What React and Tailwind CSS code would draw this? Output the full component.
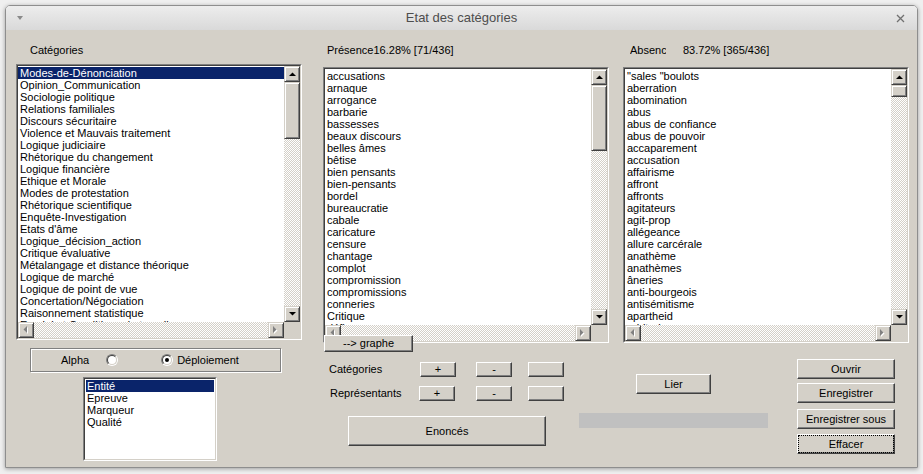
import React from 'react';

const categories = [
  'Modes-de-Dénonciation',
  'Opinion_Communication',
  'Sociologie politique',
  'Relations familiales',
  'Discours sécuritaire',
  'Violence et Mauvais traitement',
  'Logique judiciaire',
  'Rhétorique du changement',
  'Logique financière',
  'Ethique et Morale',
  'Modes de protestation',
  'Rhétorique scientifique',
  'Enquête-Investigation',
  "Etats d'âme",
  'Logique_décision_action',
  'Critique évaluative',
  'Métalangage et distance théorique',
  'Logique de marché',
  'Logique de point de vue',
  'Concertation/Négociation',
  'Raisonnement statistique',
  'Emploi et Conditions de travail',
];

const presence = [
  'accusations', 'arnaque', 'arrogance', 'barbarie', 'bassesses', 'beaux discours',
  'belles âmes', 'bêtise', 'bien pensants', 'bien-pensants', 'bordel', 'bureaucratie',
  'cabale', 'caricature', 'censure', 'chantage', 'complot', 'compromission',
  'compromissions', 'conneries', 'Critique', 'défiance',
];

const absence = [
  '"sales "boulots', 'aberration', 'abomination', 'abus', 'abus de confiance', 'abus de pouvoir',
  'accaparement', 'accusation', 'affairisme', 'affront', 'affronts', 'agitateurs',
  'agit-prop', 'allégeance', 'allure carcérale', 'anathème', 'anathèmes', 'âneries',
  'anti-bourgeois', 'antisémitisme', 'apartheid', 'arbitraire',
];

const kinds = ['Entité', 'Epreuve', 'Marqueur', 'Qualité'];

const raised = 'bg-[#d4d0c8] border border-[#d4d0c8] border-r-[#404040] border-b-[#404040] shadow-[inset_1px_1px_0_#fff,inset_-1px_-1px_0_#808080]';
const pushBtn = 'bg-[#d4d0c8] border border-white border-r-[#404040] border-b-[#404040] shadow-[inset_-1px_-1px_0_#808080] flex items-center justify-center text-black';
const checker = 'bg-[image:repeating-conic-gradient(#d4d0c8_0_25%,#ffffff_0_50%)] bg-[length:2px_2px]';

const Tri = ({ dir }) => {
  if (dir === 'up' || dir === 'down') {
    return (
      <svg width="7" height="4" viewBox="0 0 7 4">
        <polygon points={dir === 'up' ? '0,4 7,4 3.5,0.5' : '0,0 7,0 3.5,3.5'} fill="#000" />
      </svg>
    );
  }
  // disabled horizontal arrows, gray with white emboss
  const p = dir === 'left' ? '4,0 4,7 0.5,3.5' : '0,0 0,7 3.5,3.5';
  const q = dir === 'left' ? '5,1 5,8 1.5,4.5' : '1,1 1,8 4.5,4.5';
  return (
    <svg width="6" height="9" viewBox="0 0 6 9">
      <polygon points={q} fill="#fff" />
      <polygon points={p} fill="#808080" />
    </svg>
  );
};

function ScrollV({ thumb }) {
  return (
    <div className="flex flex-col w-[16px] shrink-0">
      <div className={`${raised} h-[16px] flex items-center justify-center shrink-0`}><Tri dir="up" /></div>
      <div className={`flex-1 ${checker}`}>
        <div className={`${raised} ${thumb}`} />
      </div>
      <div className={`${raised} h-[16px] flex items-center justify-center shrink-0`}><Tri dir="down" /></div>
    </div>
  );
}

function ScrollH() {
  return (
    <div className={`flex flex-1 ${checker}`}>
      <div className={`${raised} w-[16px] flex items-center justify-center`}><Tri dir="left" /></div>
      <div className="flex-1" />
      <div className={`${raised} w-[16px] flex items-center justify-center`}><Tri dir="right" /></div>
    </div>
  );
}

function ListBox({ items, selected, thumb, className }) {
  return (
    <div className={`border border-[#808080] border-r-white border-b-white ${className}`}>
      <div className="h-full flex flex-col border border-[#404040] border-r-[#d4d0c8] border-b-[#d4d0c8] bg-white">
        <div className="flex flex-1 min-h-0">
          <div className="flex-1 overflow-hidden pt-[1px]">
            {items.map((t, i) => (
              <div
                key={i}
                className={`h-[12px] leading-[12px] whitespace-nowrap pl-[2px] ${i === selected ? 'bg-[#0a246a] text-white' : 'text-black'}`}
              >
                {t}
              </div>
            ))}
          </div>
          <ScrollV thumb={thumb} />
        </div>
        <div className="flex h-[16px] shrink-0">
          <ScrollH />
          <div className="w-[16px] bg-[#d4d0c8]" />
        </div>
      </div>
    </div>
  );
}

const Radio = ({ checked }) => (
  <div className="w-[12px] h-[12px] rounded-full border border-[#808080] border-r-white border-b-white">
    <div className="w-full h-full rounded-full border border-[#404040] border-r-[#d4d0c8] border-b-[#d4d0c8] bg-white flex items-center justify-center">
      {checked && <div className="w-[4px] h-[4px] rounded-full bg-black" />}
    </div>
  </div>
);

export default function App() {
  return (
    <div className="w-[923px] h-[474px] bg-[#efefef] pt-[5px] pl-[5px] font-['Liberation_Sans',Arial,sans-serif]">
      <div className="w-[913px] h-[463px] border border-[#8e8e8e] rounded-t-[5px] overflow-hidden shadow-[0_1px_4px_rgba(0,0,0,0.35)] flex flex-col">

        {/* title bar */}
        <div className="h-[24px] shrink-0 bg-gradient-to-b from-[#ededed] to-[#d9d9d9] flex items-center">
          <div className="w-[40px] pl-[11px]">
            <svg width="6" height="4" viewBox="0 0 6 4"><polygon points="0,0 6,0 3,4" fill="#8a8a8a" /></svg>
          </div>
          <div className="flex-1 text-center text-[13px] text-[#4d4d4d]">Etat des catégories</div>
          <div className="w-[40px] flex justify-end pr-[12px]">
            <svg width="9" height="9" viewBox="0 0 9 9">
              <path d="M1 1L8 8M8 1L1 8" stroke="#707070" strokeWidth="1.3" />
            </svg>
          </div>
        </div>

        {/* body */}
        <div className="flex-1 bg-[#d4d0c8] pl-[10px] pt-[13px] text-[11px] text-black">
          <div className="flex items-start">
            <div className="w-[286px]">
              <div className="h-[14px] leading-[14px] pl-[14px]">Catégories</div>
              <ListBox items={categories} selected={0} thumb="h-[57px]" className="mt-[7px] h-[276px]" />
            </div>
            <div className="w-[286px] ml-[21px]">
              <div className="h-[14px] leading-[14px] pl-[4px]">Présence16.28% [71/436]</div>
              <ListBox items={presence} selected={-1} thumb="h-[66px]" className="mt-[10px] h-[276px]" />
            </div>
            <div className="w-[286px] ml-[14px]">
              <div className="h-[14px] leading-[14px] pl-[7px] flex">
                <span className="w-[36px] overflow-hidden whitespace-nowrap">Absence</span>
                <span className="ml-[17px]">83.72% [365/436]</span>
              </div>
              <ListBox items={absence} selected={-1} thumb="h-[12px]" className="mt-[10px] h-[276px]" />
            </div>
          </div>

          <div className="flex items-start">
            {/* left column */}
            <div className="w-[286px]">
              <div className="mt-[5px] ml-[14px] w-[251px] h-[24px] border border-[#808080] shadow-[inset_1px_1px_0_#fff,1px_1px_0_#fff] flex items-center pl-[30px]">
                <span>Alpha</span>
                <div className="ml-[17px]"><Radio /></div>
                <div className="ml-[43px]"><Radio checked /></div>
                <span className="ml-[4px]">Déploiement</span>
              </div>
              <div className="mt-[5px] ml-[67px] w-[134px] h-[84px] border border-[#808080] border-r-white border-b-white">
                <div className="h-full border border-[#404040] border-r-[#d4d0c8] border-b-[#d4d0c8] bg-white pt-[1px] px-[1px]">
                  {kinds.map((k, i) => (
                    <div
                      key={k}
                      className={`h-[12px] leading-[12px] pl-[1px] ${i === 0 ? 'bg-[#0a246a] text-white' : 'text-black'}`}
                    >
                      {k}
                    </div>
                  ))}
                </div>
              </div>
            </div>

            {/* middle column */}
            <div className="w-[256px] ml-[21px]">
              <button className={`${pushBtn} relative z-10 mt-[-8px] ml-[1px] w-[89px] h-[17px]`}>--&gt; graphe</button>
              <div className="mt-[10px] ml-[6px] flex items-center h-[15px]">
                <span className="w-[91px]">Catégories</span>
                <button className={`${pushBtn} w-[36px] h-[15px]`}>+</button>
                <button className={`${pushBtn} ml-[20px] w-[36px] h-[15px]`}>-</button>
                <button className={`${pushBtn} ml-[16px] w-[36px] h-[15px]`} />
              </div>
              <div className="mt-[9px] ml-[7px] flex items-center h-[15px]">
                <span className="w-[89px]">Représentants</span>
                <button className={`${pushBtn} w-[36px] h-[15px]`}>+</button>
                <button className={`${pushBtn} ml-[21px] w-[36px] h-[15px]`}>-</button>
                <button className={`${pushBtn} ml-[16px] w-[36px] h-[15px]`} />
              </div>
              <button className={`${pushBtn} mt-[15px] ml-[25px] w-[198px] h-[30px]`}>Enoncés</button>
            </div>

            {/* Lier + progress */}
            <div className="w-[189px]">
              <button className={`${pushBtn} mt-[31px] ml-[57px] w-[75px] h-[20px]`}>Lier</button>
              <div className="mt-[19px] h-[15px] bg-[#c0c0c0]" />
            </div>

            {/* file buttons */}
            <div className="w-[98px] ml-[29px] flex flex-col">
              <button className={`${pushBtn} mt-[16px] h-[20px]`}>Ouvrir</button>
              <button className={`${pushBtn} mt-[4px] h-[20px]`}>Enregistrer</button>
              <button className={`${pushBtn} mt-[6px] h-[20px]`}>Enregistrer sous</button>
              <button className={`${pushBtn} mt-[5px] h-[20px] outline-1 outline-dotted outline-black -outline-offset-2`}>Effacer</button>
            </div>
          </div>
        </div>
      </div>
    </div>
  );
}
